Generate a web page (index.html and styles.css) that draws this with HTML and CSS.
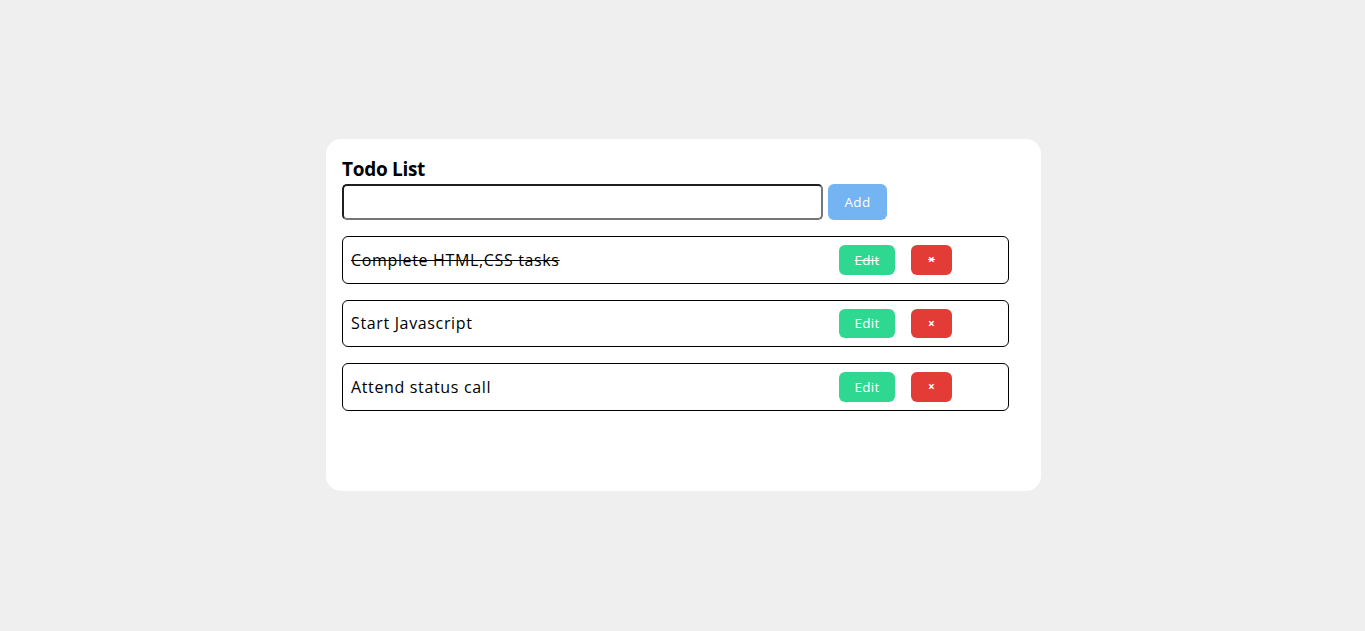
FILE: index.html
```html
<!DOCTYPE html>
<html>
<head>
<meta charset="utf-8">
<link rel="stylesheet" href="styles.css">
</head>
<body>
<div class="card">
  <h2 class="title">Todo List</h2>
  <div class="add-row">
    <input class="todo-input" type="text">
    <button class="btn btn-add">Add</button>
  </div>
  <ul class="list">
    <li class="item done"><span class="item-text">Complete HTML,CSS tasks</span><button class="btn btn-edit">Edit</button><button class="btn btn-del">×</button></li>
    <li class="item"><span class="item-text">Start Javascript</span><button class="btn btn-edit">Edit</button><button class="btn btn-del">×</button></li>
    <li class="item"><span class="item-text">Attend status call</span><button class="btn btn-edit">Edit</button><button class="btn btn-del">×</button></li>
  </ul>
</div>
</body>
</html>
```
FILE: styles.css
```css
* { box-sizing: border-box; }
html, body { margin: 0; padding: 0; }
body {
  background: #efefef;
  font-family: "Open Sans", "Noto Sans", sans-serif;
  min-height: 100vh;
  padding: 0 0 1px 2px;
  display: flex;
  align-items: center;
  justify-content: center;
  color: #000;
}
.card {
  width: 715px;
  height: 352px;
  background: #fff;
  border-radius: 15px;
  padding: 16px;
}
.title {
  margin: 0 0 1px;
  font-size: 19px;
  font-weight: 700;
  line-height: 28px;
  letter-spacing: -0.3px;
}
.add-row {
  display: flex;
  align-items: stretch;
  gap: 5px;
  height: 35.5px;
}
.todo-input {
  width: 481px;
  height: 35.5px;
  border-width: 2px;
  border-style: solid;
  border-color: #1f1f1f #767676 #767676 #1f1f1f;
  border-radius: 5px;
  outline: none;
  font-family: inherit;
  font-size: 15px;
  padding: 0 6px;
}
.btn {
  border: none;
  color: #fff;
  font-family: inherit;
  font-size: 13.5px;
  letter-spacing: 0.3px;
  border-radius: 6px;
  cursor: pointer;
  text-decoration: inherit;
}
.btn-add {
  width: 59px;
  background: #74b4f2;
}
.list {
  list-style: none;
  margin: 16.5px 0 0;
  padding: 0;
  width: 667px;
  display: flex;
  flex-direction: column;
  gap: 16px;
}
.item {
  display: flex;
  align-items: center;
  border: 1px solid #000;
  border-radius: 6px;
  padding: 8px 56px 8px 8px;
  height: 47.5px;
  font-size: 16px;
}
.item.done { text-decoration: line-through; }
.item-text {
  flex: 1;
  letter-spacing: 0.65px;
}
.btn-edit {
  width: 56px;
  height: 29.5px;
  background: #2ed891;
  margin-right: 16px;
}
.btn-del {
  width: 41px;
  height: 29.5px;
  background: #e33b36;
  font-weight: 700;
  font-size: 12px;
}
```
